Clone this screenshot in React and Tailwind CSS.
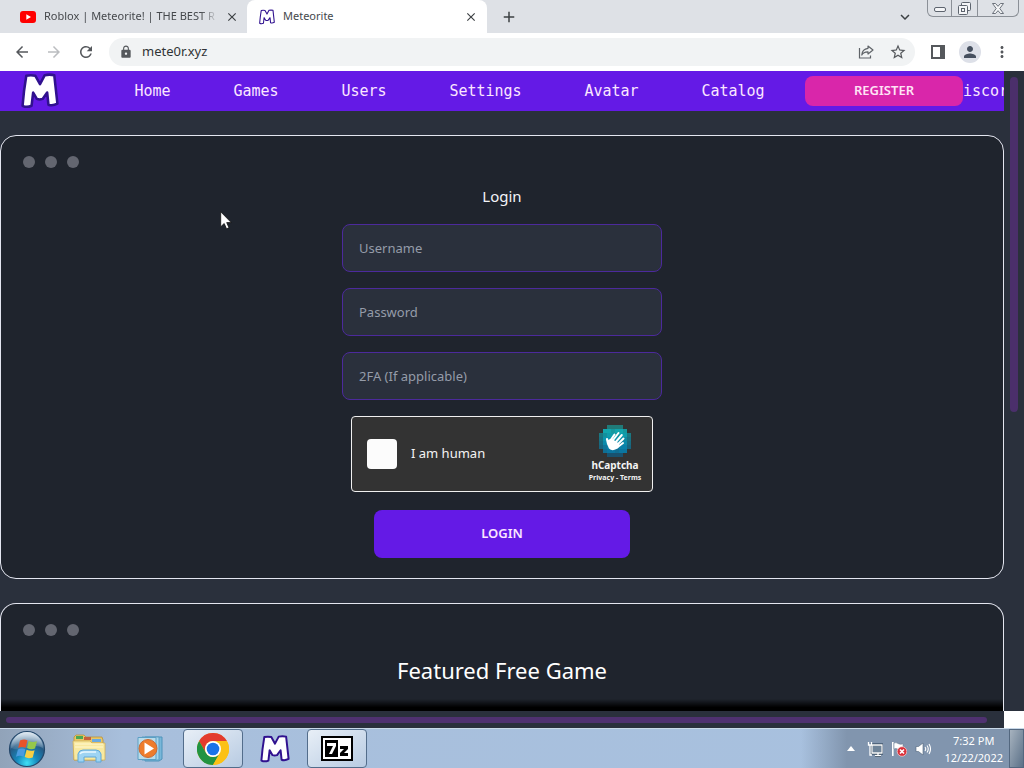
import React from "react";
import {
  MdAdd,
  MdArrowBack,
  MdArrowForward,
  MdClose,
  MdLock,
  MdMoreVert,
  MdPerson,
  MdRefresh,
  MdStarBorder,
  MdKeyboardArrowDown,
} from "react-icons/md";

function MeteoriteLogo({ className }) {
  return (
    <svg viewBox="0 0 36 34" className={className} aria-hidden="true">
      <path
        d="M5 2.5Q9.500 1.500 13.500 2.500L18 10.500L22.500 2Q27 1 31.500 2Q33 15 34.500 29Q30 31.500 26 30L24.800 18.500L20.500 24.500Q17.500 25.500 15 24.500L11.500 18.500L10 31Q5.500 33 1.500 31Q2.500 17 5 2.500Z"
        fill="#fff"
        stroke="#30118f"
        strokeWidth="2.4"
        strokeLinejoin="round"
      />
    </svg>
  );
}

function YouTubeIcon() {
  return (
    <svg viewBox="0 0 16 12" className="h-3 w-4 shrink-0" aria-hidden="true">
      <rect width="16" height="12" rx="3" fill="#f00" />
      <path d="M6.300 3.300v5.400L11 6z" fill="#fff" />
    </svg>
  );
}

function ShareIcon() {
  return (
    <svg viewBox="0 0 16 16" className="h-4 w-4" fill="none" stroke="#5f6368" strokeWidth="1.2" aria-hidden="true">
      <path d="M1.500 4v10h11v-2.500" />
      <path d="M10 2l5 4-5 4V7.800C7 7.700 5 8.700 3.800 11 4 7.500 6 4.800 10 4.300z" strokeLinejoin="round" />
    </svg>
  );
}

function SidePanelIcon() {
  return (
    <svg viewBox="0 0 14 14" className="h-3.5 w-3.5" aria-hidden="true">
      <path d="M0 0h14v14H0zM2 2v10h7V2z" fill="#55585c" fillRule="evenodd" />
    </svg>
  );
}

function MinimizeIcon() {
  return (
    <svg viewBox="0 0 12 5" className="h-[5px] w-3" aria-hidden="true">
      <rect x=".5" y=".5" width="11" height="4" rx="1.500" fill="#f4f5f7" stroke="#5d646e" />
    </svg>
  );
}

function RestoreIcon() {
  return (
    <svg viewBox="0 0 13 13" className="h-[13px] w-[13px]" fill="#f4f5f7" stroke="#5d646e" aria-hidden="true">
      <rect x="3.500" y=".5" width="9" height="8" rx="1" />
      <rect x=".5" y="3.500" width="9" height="9" rx="1" />
      <rect x="3.500" y="6.500" width="3" height="3" />
    </svg>
  );
}

function WindowCloseIcon() {
  return (
    <svg viewBox="0 0 12 11" className="h-[11px] w-3" aria-hidden="true">
      <path
        d="M.5.5h3L6 3.300 8.500.5h3L7.800 5.500l3.700 5h-3L6 7.700l-2.500 2.800h-3l3.700-5z"
        fill="#f4f5f7"
        stroke="#5d646e"
        strokeWidth=".9"
      />
    </svg>
  );
}

const captchaRows = [
  [2, 6, "#17a3a0"],
  [1, 7, "#12a5ad"],
  [0, 8, "#0f9cab"],
  [0, 8, "#0b94ad"],
  [0, 8, "#0a8aab"],
  [0, 8, "#0a80a8"],
  [1, 7, "#0b76a0"],
  [2, 6, "#0c6490"],
];

function CaptchaLogo() {
  return (
    <svg viewBox="0 0 32 32" className="h-8 w-8" aria-hidden="true">
      {captchaRows.map(([from, to, fill], row) =>
        Array.from({ length: to - from }, (_, i) => (
          <rect
            key={`${row}-${i}`}
            x={(from + i) * 4}
            y={row * 4}
            width="4"
            height="4"
            fill={fill}
            opacity={from + i === 0 || from + i === 7 || row === 0 || row === 7 ? 0.65 : (row + i) % 3 ? 1 : 0.88}
          />
        ))
      )}
      <g stroke="#fff" strokeLinecap="round" fill="none">
        <path d="M11 16L15.500 9.500M13 16.500L19.500 8M16 18L22.800 10M18 20L24.500 13.500" strokeWidth="2" />
        <path d="M18 22.500L24 18" strokeWidth="2" />
        <path d="M9 18.500L8 14" strokeWidth="2.200" />
      </g>
      <path d="M8 16Q11 13 14 14.500L20 18.500Q21 22 17.500 24Q13 26.500 10 23.500Q8 21 8 16Z" fill="#fff" />
    </svg>
  );
}

function StartOrb() {
  return (
    <svg viewBox="0 0 38 38" className="h-[38px] w-[38px]" aria-hidden="true">
      <defs>
        <radialGradient id="orb" cx=".5" cy=".9" r=".85">
          <stop offset="0" stopColor="#3fe0f5" />
          <stop offset=".35" stopColor="#1689bd" />
          <stop offset=".7" stopColor="#265a84" />
          <stop offset="1" stopColor="#8fb0cc" />
        </radialGradient>
        <linearGradient id="orbGloss" x2="0" y2="1">
          <stop offset="0" stopColor="#fff" stopOpacity=".7" />
          <stop offset="1" stopColor="#fff" stopOpacity=".08" />
        </linearGradient>
      </defs>
      <circle cx="19" cy="19" r="17.500" fill="url(#orb)" stroke="#24476a" strokeWidth="1.200" />
      <path d="M3 18a16 16 0 0 1 32 0Q27 14 19 18 11 21 3 18z" fill="url(#orbGloss)" />
      <path d="M12 10.500q4-2 7.500-.3l-1.800 7.600q-4-1.800-7.500.2z" fill="#e8542a" />
      <path d="M20.700 10.900q4 2 8.300.3l-2 7.400q-4.200 1.600-8-.5z" fill="#95c84a" />
      <path d="M9.900 19.400q3.700-1.800 7.500-.2l-1.900 7.500q-3.800-1.700-7.500.1z" fill="#4b9be0" />
      <path d="M18.600 19.700q4 2 8 .5l-1.900 7.200q-4.100 1.800-8-.3z" fill="#f8cf45" />
    </svg>
  );
}

function ExplorerIcon() {
  return (
    <svg viewBox="0 0 34 30" className="h-[30px] w-[34px]" aria-hidden="true">
      <path d="M2 3l2-2h8l2 2h16l1 3v20H2z" fill="#e9c765" stroke="#b9923b" strokeWidth=".8" />
      <path d="M4 2h7v3H4z" fill="#4aa853" />
      <path d="M12 3h7v3h-7z" fill="#c6603c" />
      <path d="M20 5h9v3h-9z" fill="#6aaae0" />
      <path d="M1 7h17l2 2h13v17H2z" fill="#f8e9a0" stroke="#cfae58" strokeWidth=".8" />
      <path d="M3 10h28M3 13h28" stroke="#fff8d0" strokeWidth="1" />
      <path d="M6 28v-8q1-4 5-4h13q4 0 5 4v8h-5v-5H12v5z" fill="#9ed4f3" stroke="#5ea8d8" strokeWidth="1" />
      <path d="M8 20q1-2 4-2h12" stroke="#e9f8ff" strokeWidth="1.500" fill="none" />
    </svg>
  );
}

function MediaPlayerIcon() {
  return (
    <svg viewBox="0 0 28 26" className="h-[26px] w-7" aria-hidden="true">
      <path d="M8 1h17v22l-3 2H8z" fill="#79b7d9" stroke="#4f93ba" />
      <path d="M5 1h17v23H5z" fill="#a8d5ea" stroke="#5c9fc4" />
      <path d="M1 1.500h18v22H1z" fill="#b9dcea" stroke="#5c9fc4" />
      <circle cx="11" cy="12.500" r="9" fill="#ee7c2b" stroke="#c96a35" />
      <path d="M7.500 6.500v12l9.500-6z" fill="#fff" />
    </svg>
  );
}

function ChromeIcon() {
  return (
    <svg viewBox="0 0 32 32" className="h-8 w-8" aria-hidden="true">
      <circle cx="16" cy="16" r="16" fill="#fbc116" />
      <path d="M2.140 8A16 16 0 0 1 29.860 8H16a8 8 0 0 0-6.930 12z" fill="#e33b2e" />
      <path d="M2.140 8A16 16 0 0 0 16 32l6.930-12a8 8 0 0 1-13.860 0z" fill="#229342" />
      <path d="M16 8h13.860A16 16 0 0 1 16 32l6.930-12A8 8 0 0 0 16 8z" fill="#fbc116" />
      <circle cx="16" cy="16" r="8" fill="#fff" />
      <circle cx="16" cy="16" r="6.300" fill="#1a73e8" />
    </svg>
  );
}

function NetworkIcon() {
  return (
    <svg viewBox="0 0 16 16" className="h-4 w-4" fill="none" aria-hidden="true">
      <path d="M5 4h10v8H5zM8 14.500h6M11 12v2" stroke="#23384d" strokeWidth="3" />
      <path d="M5.500 4.500h9v7h-9z" fill="#6f8499" />
      <path d="M5 4h10v8H5zM8 14.500h6M11 12v2.500" stroke="#fff" strokeWidth="1.300" />
      <path d="M1.500 1v3h3V1M3 4v10h2" stroke="#fff" strokeWidth="1.300" />
    </svg>
  );
}

function FlagIcon() {
  return (
    <svg viewBox="0 0 16 16" className="h-4 w-4" aria-hidden="true">
      <path d="M1 1h1.600v14H1z" fill="#fff" />
      <path d="M3 2q2-1 4 .5t5 .3v6q-3 1-5-.5T3 8z" fill="#fff" stroke="#607489" strokeWidth=".5" />
      <circle cx="11" cy="10.500" r="4.800" fill="#d9303a" stroke="#fbd5d5" strokeWidth=".7" />
      <path d="M9 8.500l4 4m0-4l-4 4" stroke="#fff" strokeWidth="1.600" />
    </svg>
  );
}

function SpeakerIcon() {
  return (
    <svg viewBox="0 0 16 16" className="h-4 w-4" fill="none" aria-hidden="true">
      <path d="M1 5.500h2.500L8 2v12l-4.500-3.500H1z" fill="#fff" stroke="#4d6379" strokeWidth=".6" />
      <path d="M10 6q1.500 2 0 4M12 4.500q2.500 3.500 0 7M14 3q3 5 0 10" stroke="#fff" strokeWidth="1.100" />
    </svg>
  );
}

function TabStrip() {
  return (
    <div className="flex h-[33px] shrink-0 bg-[#dee1e6] text-[11px] text-[#45484c]">
      <div className="flex w-[247px] shrink-0 items-center rounded-br-lg pr-2 pl-5">
        <YouTubeIcon />
        <span className="ml-2 w-[174px] overflow-hidden mask-r-from-90% whitespace-nowrap">
          Roblox | Meteorite! | THE BEST R
        </span>
        <button aria-label="Close Roblox tab" className="ml-auto text-[#3c4043]">
          <MdClose className="h-3.5 w-3.5" stroke="currentColor" />
        </button>
      </div>
      <div className="flex w-60 shrink-0 items-center rounded-t-lg bg-white pr-[9px] pl-3">
        <MeteoriteLogo className="h-4 w-4" />
        <span className="ml-2">Meteorite</span>
        <button aria-label="Close Meteorite tab" className="ml-auto text-[#3c4043]">
          <MdClose className="h-3.5 w-3.5" stroke="currentColor" />
        </button>
      </div>
      <button aria-label="New tab" className="ml-[13px] text-[#3c4043]">
        <MdAdd className="h-[18px] w-[18px]" stroke="currentColor" />
      </button>
      <div className="ml-auto flex">
        <button aria-label="Search tabs" className="mr-[13px] text-[#3c4043]">
          <MdKeyboardArrowDown className="h-[18px] w-[18px]" stroke="currentColor" />
        </button>
        <div className="mr-[5px] flex h-[17px] divide-x divide-[#8b9097] rounded-b-md border border-t-0 border-[#8b9097]">
          <button aria-label="Minimize" className="flex w-6 items-end justify-center pb-1">
            <MinimizeIcon />
          </button>
          <button aria-label="Restore" className="flex w-[26px] items-center justify-center">
            <RestoreIcon />
          </button>
          <button aria-label="Close window" className="flex w-10 items-center justify-center">
            <WindowCloseIcon />
          </button>
        </div>
      </div>
    </div>
  );
}

function Toolbar() {
  return (
    <div className="flex h-[38px] shrink-0 items-center bg-white pr-[13px] pl-[13px] text-[#55585c]">
      <div className="flex gap-[14px]">
        <button aria-label="Back">
          <MdArrowBack className="h-[18px] w-[18px]" />
        </button>
        <button aria-label="Forward" className="text-[#bbbdc0]">
          <MdArrowForward className="h-[18px] w-[18px]" />
        </button>
        <button aria-label="Reload">
          <MdRefresh className="h-[18px] w-[18px]" />
        </button>
      </div>
      <div className="ml-[14px] flex h-7 flex-1 items-center rounded-full bg-[#f1f3f4] pr-2 pl-[10px]">
        <MdLock className="h-[14px] w-[14px]" />
        <input
          aria-label="Address"
          defaultValue="mete0r.xyz"
          className="ml-[9px] min-w-0 flex-1 bg-transparent text-[13px] text-[#303336] outline-none"
        />
        <button aria-label="Share">
          <ShareIcon />
        </button>
        <button aria-label="Bookmark" className="ml-[15px]">
          <MdStarBorder className="h-[18px] w-[18px]" />
        </button>
      </div>
      <button aria-label="Side panel" className="ml-4">
        <SidePanelIcon />
      </button>
      <button
        aria-label="Profile"
        className="ml-[14px] flex h-[22px] w-[22px] items-center justify-center rounded-full bg-[#dde0e8] text-[#46505f]"
      >
        <MdPerson className="h-[18px] w-[18px]" />
      </button>
      <button aria-label="Menu" className="ml-3">
        <MdMoreVert className="h-[18px] w-[18px]" />
      </button>
    </div>
  );
}

const links = ["Home", "Games", "Users", "Settings", "Avatar", "Catalog"];
const linkWidths = ["w-[99px]", "w-[108px]", "w-[108px]", "w-[135px]", "w-[117px]", "w-[126px]"];

function SiteNav() {
  return (
    <nav className="flex h-10 items-center overflow-hidden bg-[#641ae6] pl-[21px] text-[#fbe6ff]">
      <a href="#home" aria-label="Meteorite" className="mr-11 shrink-0">
        <MeteoriteLogo className="h-9 w-[38px]" />
      </a>
      {links.map((label, i) => (
        <a
          key={label}
          href={`#${label.toLowerCase()}`}
          className={`${linkWidths[i]} shrink-0 text-center font-['DejaVu_Sans_Mono','Liberation_Mono',monospace] text-[15px]`}
        >
          {label}
        </a>
      ))}
      <button className="z-10 ml-[9px] h-[30px] w-[158px] shrink-0 rounded-lg bg-[#d926aa] text-[13px] font-semibold text-[#ffe3f5]">
        REGISTER
      </button>
      <a href="#discord" className="-ml-[9px] shrink-0 font-['DejaVu_Sans_Mono','Liberation_Mono',monospace] text-[15px]">
        Discord
      </a>
    </nav>
  );
}

function WindowCard({ children, className }) {
  return (
    <section className={`rounded-2xl border border-[#e4e6f0] bg-[#1f242d] pt-5 ${className}`}>
      <div className="ml-[22px] flex gap-[10px]">
        <span className="h-3 w-3 rounded-full bg-[#636670]" />
        <span className="h-3 w-3 rounded-full bg-[#636670]" />
        <span className="h-3 w-3 rounded-full bg-[#636670]" />
      </div>
      {children}
    </section>
  );
}

function Field({ label, type }) {
  return (
    <input
      type={type}
      placeholder={label}
      aria-label={label}
      className="h-12 w-80 rounded-lg border border-[#4c2a9c] bg-[#2a303c] px-4 text-[13px] text-[#c3cad6] outline-none placeholder:text-[#959ca9]"
    />
  );
}

function LoginForm() {
  return (
    <form className="flex flex-col items-center gap-4 pt-4 pb-5" onSubmit={(e) => e.preventDefault()}>
      <h1 className="text-[15px] leading-6 text-[#f3f4f8]">Login</h1>
      <Field label="Username" type="text" />
      <Field label="Password" type="password" />
      <Field label="2FA (If applicable)" type="text" />
      <div className="flex h-[76px] w-[302px] items-center rounded border border-[#f0f0f0] bg-[#333] pr-2 pl-[15px] text-[#f4f4f4]">
        <input id="human" type="checkbox" className="h-[30px] w-[30px] appearance-none rounded bg-[#fcfcfc]" />
        <label htmlFor="human" className="ml-[14px] text-[13px]">
          I am human
        </label>
        <div className="ml-auto flex w-[58px] flex-col items-center font-bold whitespace-nowrap">
          <CaptchaLogo />
          <span className="text-[10px] leading-4">hCaptcha</span>
          <span className="text-[7px] leading-[10px]">
            <a href="#privacy">Privacy</a> - <a href="#terms">Terms</a>
          </span>
        </div>
      </div>
      <button className="mt-0.5 h-12 w-64 rounded-lg bg-[#641ae6] text-[13px] font-semibold text-[#fbe6ff]">LOGIN</button>
    </form>
  );
}

function TaskButton({ label, active, children }) {
  return (
    <button
      aria-label={label}
      className={
        active
          ? "mx-px flex w-[60px] items-center justify-center rounded-sm border border-[#536d8b] bg-linear-to-br from-[#e8eff7] to-[#b8cbe2]"
          : "flex w-[62px] items-center justify-center"
      }
    >
      {children}
    </button>
  );
}

function Taskbar() {
  return (
    <footer className="flex h-10 shrink-0 border-t border-[#c8d8e8] bg-linear-to-r from-[#91a3b9] via-[#a8bfdc] via-12% to-[#a8c1df] text-white">
      <button aria-label="Start" className="ml-2 flex w-[50px] items-center">
        <StartOrb />
      </button>
      <TaskButton label="Windows Explorer">
        <ExplorerIcon />
      </TaskButton>
      <TaskButton label="Windows Media Player">
        <MediaPlayerIcon />
      </TaskButton>
      <TaskButton label="Google Chrome" active>
        <ChromeIcon />
      </TaskButton>
      <TaskButton label="Meteorite">
        <MeteoriteLogo className="h-7 w-[30px]" />
      </TaskButton>
      <TaskButton label="7-Zip" active>
        <span className="flex h-[25px] w-8 items-center justify-center border-2 border-black bg-white text-black">
          <svg viewBox="0 0 24 17" className="h-[17px] w-6" aria-hidden="true">
            <path d="M0 0h13v17H0z" />
            <path d="M2 3h9v3L7 14H4l4-8H2z" fill="#fff" />
            <path d="M15 6h8v3l-4 4h4v3h-8v-3l4-4h-4z" />
          </svg>
        </span>
      </TaskButton>
      <div className="flex flex-1 items-center justify-end bg-linear-to-r from-transparent from-66% to-[#8195ae] to-73%">
        <button aria-label="Show hidden icons" className="mr-3">
          <svg viewBox="0 0 8 5" className="h-[5px] w-2" aria-hidden="true">
            <path d="M4 0l4 5H0z" fill="#fff" />
          </svg>
        </button>
        <div className="mr-[13px] flex gap-2">
          <NetworkIcon />
          <FlagIcon />
          <SpeakerIcon />
        </div>
        <div className="mr-1.5 text-center text-[11px] leading-[17px] whitespace-nowrap">
          <p>7:32 PM</p>
          <p>12/22/2022</p>
        </div>
        <button
          aria-label="Show desktop"
          className="h-full w-[15px] border border-[#53677f] bg-linear-to-br from-[#a7b3bf] to-[#5c7188]"
        />
      </div>
    </footer>
  );
}

export default function App() {
  return (
    <div className="flex h-screen flex-col overflow-hidden bg-[#2a303c] font-['Noto_Sans','Open_Sans',sans-serif]">
      <TabStrip />
      <Toolbar />
      <div className="flex min-h-0 flex-1">
        <main className="flex min-w-0 flex-1 flex-col overflow-hidden">
          <SiteNav />
          <div className="flex min-h-0 flex-1 flex-col gap-6 pt-6">
            <WindowCard className="shrink-0">
              <LoginForm />
            </WindowCard>
            <WindowCard className="flex min-h-0 flex-1 flex-col rounded-b-none border-b-0">
              <h2 className="mt-4 text-center text-[22px] leading-9 text-white">Featured Free Game</h2>
              <div className="mt-auto h-3 shrink-0 bg-linear-to-b from-transparent to-black to-70%" />
            </WindowCard>
          </div>
        </main>
        <div className="w-5 shrink-0 px-1.5 pt-1.5">
          <div className="h-[335px] w-2 rounded-full bg-[#4b2f6b]" />
        </div>
      </div>
      <div className="flex h-[17px] shrink-0">
        <div className="flex flex-1 items-center pr-[17px] pl-1.5">
          <div className="h-1.5 flex-1 rounded-full bg-[#4f3170]" />
        </div>
        <div className="w-5 bg-white" />
      </div>
      <Taskbar />
      <svg viewBox="0 0 12 19" className="pointer-events-none absolute top-[211px] left-[220px] h-[19px] w-3" aria-hidden="true">
        <path d="M.7.800v15l3.500-3.300 2.300 5.300 2.500-1-2.300-5.200h4.600z" fill="#fff" stroke="#111" strokeWidth=".8" />
      </svg>
    </div>
  );
}
